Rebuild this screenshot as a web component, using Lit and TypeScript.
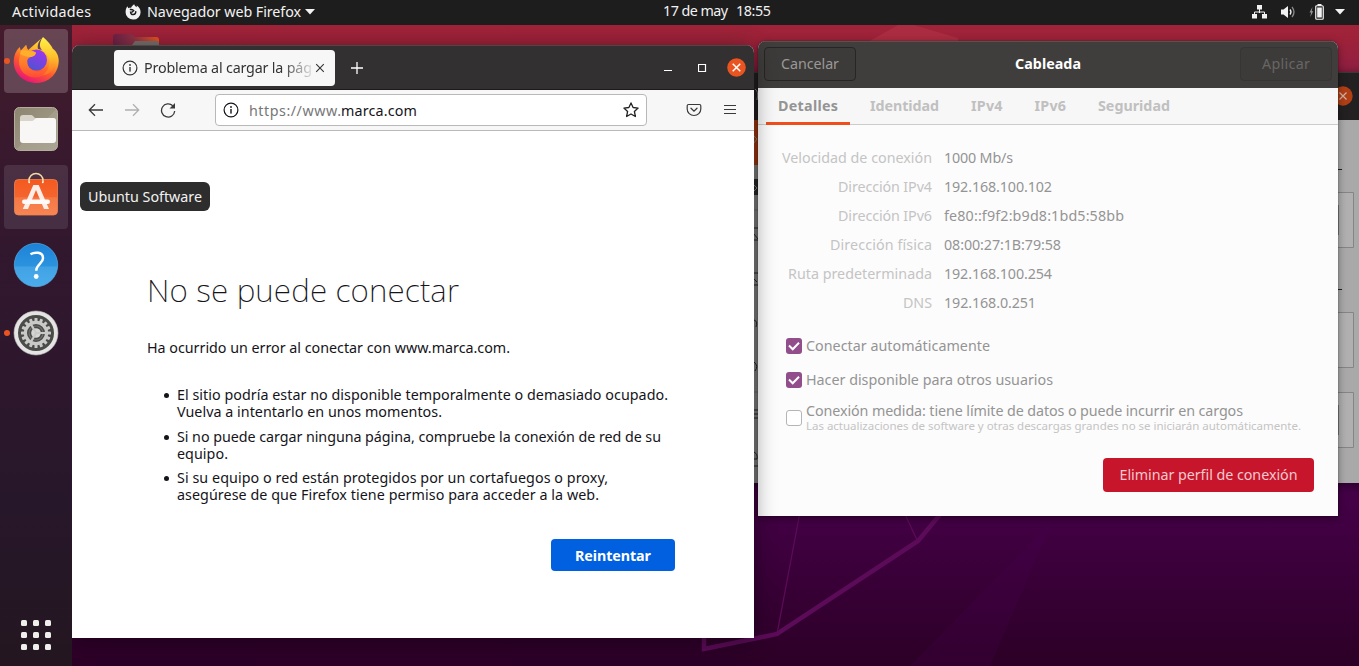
import { LitElement, html, css, svg } from "lit";
import { customElement, property } from "lit/decorators.js";

/** One line of text whose tracking is adjusted so that it spans `w` pixels. */
@customElement("fit-text")
class FitText extends LitElement {
  @property({ type: Number }) w = 0;
  @property() text = "";
  static styles = css`
    :host { display: block; flex: none; white-space: pre; overflow: visible; }
    .t { display: inline-block; white-space: pre; }
  `;
  render() {
    return html`<span class="t">${this.text}</span>`;
  }
  updated() {
    const t = this.renderRoot.querySelector(".t") as HTMLElement;
    t.style.letterSpacing = "0px";
    const natural = t.getBoundingClientRect().width;
    t.style.letterSpacing = `${(this.w - natural) / Math.max(1, this.text.length - 1)}px`;
    this.style.width = `${this.w}px`;
  }
}

const fit = (text: string, w: number, cls = "") =>
  html`<fit-text class=${cls} .text=${text} .w=${w}></fit-text>`;

const infoIcon = html`<svg class="i16" viewBox="0 0 16 16"><circle cx="8" cy="8" r="6.9" fill="none" stroke="currentColor" stroke-width="1.2"/><rect x="7.3" y="7" width="1.4" height="4.6" fill="currentColor"/><circle cx="8" cy="5" r=".9" fill="currentColor"/></svg>`;

@customElement("top-bar")
class TopBar extends LitElement {
  static styles = css`
    :host { display: flex; height: 25px; background: #1d1d1d; color: #f2f2f2; line-height: 23px; box-sizing: border-box; }
    .left, .right { display: flex; align-items: center; height: 23px; box-sizing: border-box; }
    .left { padding-left: 12px; width: 663px; flex: none; }
    .fx { margin: 0 6px 0 34px; }
    .caret { margin-left: 4px; }
    .clock { display: flex; gap: 8px; flex: none; line-height: 22px; }
    .right { flex: 1; justify-content: flex-end; padding-right: 14px; }
    .net { margin-right: 14px; }
    .snd { margin-right: 13px; }
    .bat { margin-right: 11px; }
    svg { display: block; flex: none; }
  `;
  render() {
    return html`
      <div class="left">
        ${fit("Actividades", 79)}
        <svg class="fx" width="16" height="16" viewBox="0 0 16 16"><path fill="#f2f2f2" d="M9.200.2c.4 1.500 1.400 2 2.300 3 .3-.6.3-1 .2-1.600 2.300 1.300 3.900 3.700 3.900 6.600a7.500 7.300 0 0 1-15 .2C.5 6 1.200 4 2.500 2.300c.1.900.4 1.400.9 1.900.9-.5 1.700-.6 2.700-.4C6.500 2.300 7.800 1.300 9.200.2z"/><path d="M4.800 5.600c1.700-.3 3 .2 3.800.9L7.400 7.900l-1.800.3c.1 1.700 1.300 2.500 2.600 2.400 1.900-.1 2.900-1.700 2.400-3.500" fill="none" stroke="#1d1d1d" stroke-width="1.500"/></svg>
        ${fit("Navegador web Firefox", 154)}
        <svg class="caret" width="10" height="6" viewBox="0 0 10 6"><path fill="#f2f2f2" d="M0 0h10L5 5.500z"/></svg>
      </div>
      <div class="clock">${fit("17 de may", 65)}${fit("18:55", 35)}</div>
      <div class="right">
        <svg class="net" width="15" height="14" viewBox="0 0 15 14"><path d="M7.500 4v4M2.500 9V7h10v2" fill="none" stroke="#f2f2f2"/><path fill="#f2f2f2" d="M5 0h5v4.500H5zM0 9h5v4.500H0zM10 9h5v4.500h-5z"/></svg>
        <svg class="snd" width="15" height="14" viewBox="0 0 15 14"><path fill="#f2f2f2" d="M0 4.500h2.500L7 1v12L2.500 9.500H0z"/><path d="M9 4.500q2 2.500 0 5" fill="none" stroke="#f2f2f2" stroke-width="1.300"/><path d="M11 2q4 5 0 10" fill="none" stroke="#8a8a8a" stroke-width="1.300"/></svg>
        <svg class="bat" width="15" height="16" viewBox="0 0 15 16"><path fill="#999" d="M3.500 3 .5 8.600h1.600L1.300 13l2.900-5.700H2.700z"/><rect x="6.750" y="1.750" width="7.500" height="13.500" rx="1" fill="none" stroke="#f2f2f2" stroke-width="1.200"/><path fill="#f2f2f2" d="M8.200 3.500h4.600v10H8.200zM8.500 0h4v2h-4z"/></svg>
        <svg width="10" height="6" viewBox="0 0 10 6"><path fill="#f2f2f2" d="M0 0h10L5 5.500z"/></svg>
      </div>`;
  }
}

@customElement("app-dock")
class AppDock extends LitElement {
  static styles = css`
    :host { display: flex; flex-direction: column; gap: 4px; width: 72px; box-sizing: border-box; padding: 4px 4px 13px;
      background: linear-gradient(#451b2c 0, #3d1a2d 80px, #34182e 170px, #2e172d 330px, #27172a 480px, #241620 641px); }
    .slot { width: 64px; height: 64px; border-radius: 4px; display: flex; position: relative; }
    .active { background: rgba(255,255,255,.19); }
    .hover { background: rgba(255,255,255,.1); }
    .run::before { content: ""; position: absolute; left: 0; top: 29px; width: 6px; height: 6px; border-radius: 50%; background: #e95420; }
    svg { display: block; }
    .grid { margin: auto auto 0; width: 30px; display: grid; grid-template-columns: repeat(3, 6px); gap: 6px; padding-bottom: 3px; }
    .grid i { width: 6px; height: 6px; border-radius: 1.500px; background: #f0eeec; }
  `;
  render() {
    const teeth = Array.from({ length: 16 }, (_, i) =>
      svg`<rect x="-1.500" y="-15" width="3" height="4" rx=".6" fill="#c9c9c7" transform="rotate(${i * 22.5})"/>`);
    return html`
      <div class="slot active run"><svg width="64" height="64" viewBox="0 0 64 64">
        <defs>
          <linearGradient id="f1" x1=".8" y1="0" x2=".3" y2="1"><stop offset="0" stop-color="#fff044"/><stop offset=".35" stop-color="#ffb52a"/><stop offset=".65" stop-color="#ff5a2c"/><stop offset="1" stop-color="#e6117a"/></linearGradient>
          <linearGradient id="f2" x1=".7" y1="0" x2=".2" y2="1"><stop offset="0" stop-color="#a034ee"/><stop offset="1" stop-color="#4a55d0"/></linearGradient>
          <linearGradient id="f3" x1="0" y1="0" x2="0" y2="1"><stop offset="0" stop-color="#fff24a"/><stop offset=".5" stop-color="#ffc22c"/><stop offset="1" stop-color="#ff6a26"/></linearGradient>
          <linearGradient id="f4" x1="0" y1="0" x2="0" y2="1"><stop offset="0" stop-color="#ffa02c"/><stop offset=".6" stop-color="#ff7a2a"/><stop offset="1" stop-color="#ff4a38"/></linearGradient>
        </defs>
        <path fill="url(#f1)" d="M39 8c-4 3.500-6 8-5 12l8 2 7-2c3 2 5.500 6 5.700 11C55 44 45 54 32.500 54 20 54 9.700 45 9.700 32.500c0-6 2-10.500 6-14.500l1 3.500 5.500-5.500c.2 2 .8 3.500 2 5z"/>
        <circle cx="32.500" cy="31" r="10.500" fill="url(#f2)"/>
        <path fill="url(#f3)" d="M39 8c4 3.500 8.500 8 11 14 3 6 3 14-2 19.500-4 4.500-9 5.500-13 5 8-2 11-8 10.500-15-.6-5-4-8-7-10-3.500-3-3.500-8 .5-13.500z"/>
        <path fill="url(#f4)" d="M22.200 16c.2 2 .8 4 2.300 6 2.500-.6 5-.3 7.500 1.500-.5 3-1.500 3.500-5 4.500-3 1-4 2.500-3.700 5 .4 6 5 9.500 10.200 9.500 4.500 0 8-2 10-5-1 7-6 11-12.500 11-9 0-16-7-16-15.500 0-6.500 2.700-12.500 7.200-17z"/>
        <path fill="#ffb52c" opacity=".85" d="M17 21.500c3-.6 6-.2 8 .7 3 0 5 .2 7 1.500-1 2.600-2 3.200-5 4.300-4-.2-8-1-11-3z"/>
      </svg></div>
      <div class="slot"><svg width="64" height="64" viewBox="0 0 64 64">
        <defs><linearGradient id="g1" x1="0" y1="0" x2="1" y2="1"><stop offset="0" stop-color="#8c8670"/><stop offset=".5" stop-color="#999380"/><stop offset=".51" stop-color="#a39d8a"/><stop offset="1" stop-color="#aaa593"/></linearGradient></defs>
        <rect x="10.500" y="10.500" width="43" height="43" rx="5" fill="url(#g1)" stroke="#b3ae9c"/>
        <path fill="#d9d4ca" d="M16 21q0-3 3-3h8q1 0 2 1l2 2h18q3 0 3 3v6H16z"/>
        <path fill="#f8f7f6" d="M16 24h12q1 0 2-1l1-1q1-1 2-1h16q3 0 3 3v19q0 3-3 3H19q-3 0-3-3z"/>
      </svg></div>
      <div class="slot hover"><svg width="64" height="64" viewBox="0 0 64 64">
        <defs><linearGradient id="s1" x1="0" y1="0" x2="0" y2="1"><stop offset="0" stop-color="#f4591f"/><stop offset=".5" stop-color="#f4652e"/><stop offset=".51" stop-color="#f57845"/><stop offset="1" stop-color="#f88552"/></linearGradient></defs>
        <rect x="10.500" y="14.500" width="43" height="35.500" rx="4" fill="url(#s1)" stroke="#ee8352" stroke-width=".8"/>
        <path d="M25 17v-1.500a7 7 0 0 1 14 0V17" fill="none" stroke="#f3d9a4" stroke-width="1.600"/>
        <path fill="#fbeee8" d="M29.300 20h5.400L45 44h-5l-8-19-8 19h-5.200z"/>
        <rect x="18" y="34.500" width="28" height="4.500" rx="2.200" fill="#fffaf7"/>
        <circle cx="25.200" cy="17.300" r=".9" fill="#fff"/><circle cx="38.800" cy="17.300" r=".9" fill="#fff"/>
      </svg></div>
      <div class="slot"><svg width="64" height="64" viewBox="0 0 64 64">
        <defs><linearGradient id="h1" x1="0" y1="0" x2="0" y2="1"><stop offset="0" stop-color="#1c82d8"/><stop offset=".53" stop-color="#2c93df"/><stop offset=".54" stop-color="#41a3e5"/><stop offset="1" stop-color="#4aaceb"/></linearGradient></defs>
        <circle cx="32" cy="32" r="21.700" fill="url(#h1)" stroke="#56aee8" stroke-width=".7"/>
        <path d="M26.500 21.300c4-2.500 12.500-2.700 12.500 3.900 0 5.500-6.800 6-6.800 12.600" fill="none" stroke="#fff" stroke-width="2.500"/>
        <circle cx="32.200" cy="43.500" r="2.400" fill="#fff"/>
      </svg></div>
      <div class="slot run"><svg width="64" height="64" viewBox="0 0 64 64">
        <circle cx="32" cy="32" r="20" fill="#4b4b49" stroke="#e4e4e2" stroke-width="4"/>
        <circle cx="32" cy="32" r="22" fill="none" stroke="#bdbbb8" stroke-width=".6"/>
        <g transform="translate(32 32)">${teeth}
          <circle r="10.600" fill="none" stroke="#c9c9c7" stroke-width="3.200"/>
          <circle r="4.800" fill="#d6d6d4"/>
          <path d="M0 0h10M0 0-5-8.700M0 0-5 8.700" stroke="#c9c9c7" stroke-width="2.200"/>
          <circle r="7" fill="none" stroke="#c9c9c7" stroke-width="1.200" opacity=".3"/>
        </g>
      </svg></div>
      <div class="grid">${Array.from({ length: 9 }, () => html`<i></i>`)}</div>`;
  }
}

@customElement("firefox-window")
class FirefoxWindow extends LitElement {
  static styles = css`
    :host { display: flex; flex-direction: column; box-sizing: border-box; border-radius: 8px 8px 0 0; overflow: hidden; background: #fff; color: #15141a; }
    svg { display: block; flex: none; }
    .i16 { width: 16px; height: 16px; }
    .head { height: 45px; box-sizing: border-box; background: #333031; border-top: 1px solid #4b4846; border-bottom: 1px solid #1c1a1a; display: flex; align-items: center; padding: 1px 8px 0 42px; }
    .tab { width: 221px; height: 36px; box-sizing: border-box; background: #f7f7f7; border-radius: 4px; color: #333; display: flex; align-items: center; padding: 0 12px 0 8px; gap: 6px; line-height: 36px; }
    .fade { width: 168px; -webkit-mask-image: linear-gradient(90deg, #000 138px, transparent 172px); mask-image: linear-gradient(90deg, #000 138px, transparent 172px); flex: none; }
    .x { margin-left: -3.500px; }
    .plus { margin-left: 15.500px; }
    .ctl { margin-left: auto; display: flex; align-items: center; gap: 25px; }
    .close { margin-left: -5px; margin-top: -1px; }
    .bar { height: 41px; box-sizing: border-box; background: #f7f7f7; border-bottom: 1px solid #b9b9b9; display: flex; align-items: center; padding: 0 16px; }
    .fwd { margin: 0 20px; }
    .url { margin-left: 39px; width: 432px; height: 32px; box-sizing: border-box; border: 1px solid #b8b8b8; border-radius: 4px; background: #fff; display: flex; align-items: center; padding: 0 7px; line-height: 31px; }
    .proto { margin-left: 10px; color: #777; }
    .star { margin-left: auto; }
    .pocket { margin-left: 39px; }
    .menu { margin-left: 20px; }
    .page { flex: 1; padding: 138px 79px 0 75px; display: flex; flex-direction: column; }
    .h { font-family: "Noto Sans", "Open Sans", sans-serif; font-size: 31.500px; font-weight: 200; line-height: 42px; }
    .p { margin-top: 28px; line-height: 17px; }
    ul { margin: 30px 0 0; padding: 0 0 0 30px; list-style: none; line-height: 17px; display: flex; flex-direction: column; gap: 7.500px; }
    li { position: relative; }
    li::before { content: ""; position: absolute; left: -13px; top: 7px; width: 5px; height: 5px; border-radius: 50%; background: #15141a; }
    .btn { align-self: flex-end; width: 124px; height: 32px; margin-top: 36px; border-radius: 4px; background: #0060df; color: #fff; font-weight: 700; line-height: 33px; display: flex; justify-content: center; }
  `;
  render() {
    return html`
      <div class="head">
        <div class="tab">${infoIcon}
          <div class="fade">${fit("Problema al cargar la pág", 168)}</div>
          <svg class="x" width="10" height="10" viewBox="0 0 10 10"><path d="m1.200 1.200 7.600 7.600M8.800 1.200 1.200 8.800" stroke="#333" stroke-width="1.100"/></svg>
        </div>
        <svg class="plus" width="12" height="12" viewBox="0 0 12 12"><path d="M6 0v12M0 6h12" stroke="#fff" stroke-width="1.300"/></svg>
        <div class="ctl">
          <svg width="9" height="9" viewBox="0 0 9 9"><path d="M0 6.500h8" stroke="#fff"/></svg>
          <svg width="9" height="9" viewBox="0 0 9 9"><path d="M.5.5h7v7h-7z" fill="none" stroke="#fff" stroke-width="1.200"/></svg>
          <svg class="close" width="19" height="19" viewBox="0 0 19 19"><circle cx="9.500" cy="9.500" r="9.300" fill="#e95420"/><path d="m5.700 5.700 7.600 7.600M13.300 5.700l-7.600 7.600" stroke="#fff" stroke-width="1.500"/></svg>
        </div>
      </div>
      <div class="bar">
        <svg width="16" height="16" viewBox="0 0 16 16"><path d="M15 8H1.500M7 2.300 1.300 8 7 13.700" fill="none" stroke="#3a3a3a" stroke-width="1.300"/></svg>
        <svg class="fwd" width="16" height="16" viewBox="0 0 16 16"><path d="M1 8h13.500M9 2.300 14.700 8 9 13.700" fill="none" stroke="#b0b0b0" stroke-width="1.300"/></svg>
        <svg width="16" height="16" viewBox="0 0 16 16"><path d="M14.700 9A6.600 6.600 0 1 1 12.800 3.800" fill="none" stroke="#3a3a3a" stroke-width="1.300"/><path fill="#3a3a3a" d="M15 1v5.500H9.500z"/></svg>
        <div class="url">${infoIcon}${fit("https://www.", 92, "proto")}${fit("marca.com", 76)}
          <svg class="star" width="16" height="16" viewBox="0 0 16 16"><path d="m8 .9 2.100 4.600 5 .6-3.700 3.400 1 5L8 12l-4.400 2.500 1-5L.9 6.100l5-.6z" fill="none" stroke="#222" stroke-width="1.300" stroke-linejoin="round"/></svg>
        </div>
        <svg class="pocket" width="16" height="16" viewBox="0 0 16 16"><path d="M2.500 2.500h11q1.300 0 1.300 1.300V7a6.800 6.500 0 0 1-13.600 0V3.800q0-1.300 1.300-1.300z" fill="none" stroke="#3a3a3a" stroke-width="1.200"/><path d="m5 6.200 3 2.900 3-2.900" fill="none" stroke="#3a3a3a" stroke-width="1.300" stroke-linecap="round"/></svg>
        <svg class="menu" width="16" height="16" viewBox="0 0 16 16"><path d="M2 3.500h12M2 7.500h12M2 11.500h12" stroke="#3a3a3a" stroke-width="1.200"/></svg>
      </div>
      <div class="page">
        ${fit("No se puede conectar", 312, "h")}
        ${fit("Ha ocurrido un error al conectar con www.marca.com.", 363, "p")}
        <ul>
          <li>${fit("El sitio podría estar no disponible temporalmente o demasiado ocupado.", 491)}${fit("Vuelva a intentarlo en unos momentos.", 265)}</li>
          <li>${fit("Si no puede cargar ninguna página, compruebe la conexión de red de su", 484)}${fit("equipo.", 51)}</li>
          <li>${fit("Si su equipo o red están protegidos por un cortafuegos o proxy,", 431)}${fit("asegúrese de que Firefox tiene permiso para acceder a la web.", 422)}</li>
        </ul>
        <div class="btn">${fit("Reintentar", 76)}</div>
      </div>`;
  }
}

@customElement("network-dialog")
class NetworkDialog extends LitElement {
  static styles = css`
    :host { display: flex; flex-direction: column; box-sizing: border-box; border-radius: 8px 8px 0 0; overflow: hidden; background: #fcfcfc; color: #949494; }
    .head { height: 47px; box-sizing: border-box; border-top: 1px solid #55524f; background: #403e3c; display: flex; align-items: center; justify-content: space-between; padding: 0 6px 2px; }
    .b { width: 92px; height: 34px; box-sizing: border-box; border: 1px solid #272625; border-radius: 4px; display: flex; justify-content: center; line-height: 32px; background: #3d3b39; color: #9a9896; }
    .dis { color: #686664; border-color: #373533; }
    .title { color: #fff; font-weight: 700; line-height: 32px; }
    .tabs { height: 37px; box-sizing: border-box; background: #f7f7f7; border-bottom: 1px solid #ccc; display: flex; padding: 0 8px; gap: 8px; font-weight: 700; color: #c0c0c0; line-height: 35px; }
    .tab { box-sizing: border-box; height: 37px; padding: 0 12px; }
    .on { color: #949494; border-bottom: 3px solid #f04f1c; }
    .body { flex: 1; display: flex; flex-direction: column; padding: 18px 24px 24px 24px; }
    .grid { display: grid; grid-template-columns: 150px 1fr; column-gap: 12px; grid-auto-rows: 29px; line-height: 29px; }
    .k { justify-self: end; color: #c4c4c4; }
    .row { display: flex; align-items: center; gap: 4px; height: 34px; padding-left: 4px; line-height: 34px; }
    .first { margin-top: 12px; }
    .box { width: 16px; height: 16px; flex: none; border-radius: 3px; background: #924d8b; }
    .off { box-sizing: border-box; background: #fff; border: 1px solid #b5b5b5; margin-top: 8px; }
    .two { line-height: 15px; padding-top: 8px; }
    .small { font-size: 11.500px; color: #c4c4c4; }
    svg { display: block; }
    .del { margin: auto 0 0 auto; width: 211px; height: 34px; border-radius: 4px; background: #c7162b; color: #f6c9ce; line-height: 33px; display: flex; justify-content: center; }
  `;
  render() {
    const tabs: [string, number][] = [["Detalles", 60], ["Identidad", 69], ["IPv4", 31.5], ["IPv6", 31.5], ["Seguridad", 72]];
    const rows: [string, number, string, number][] = [
      ["Velocidad de conexión", 150, "1000 Mb/s", 69],
      ["Dirección IPv4", 94, "192.168.100.102", 108],
      ["Dirección IPv6", 94, "fe80::f9f2:b9d8:1bd5:58bb", 180],
      ["Dirección física", 102, "08:00:27:1B:79:58", 117],
      ["Ruta predeterminada", 144, "192.168.100.254", 108],
      ["DNS", 29, "192.168.0.251", 92],
    ];
    const tick = html`<svg width="16" height="16" viewBox="0 0 16 16"><path d="m3 7.500 3.700 3.700L13 4.700" fill="none" stroke="#fff" stroke-width="2"/></svg>`;
    return html`
      <div class="head"><div class="b">${fit("Cancelar", 58)}</div>${fit("Cableada", 66, "title")}<div class="b dis">${fit("Aplicar", 48)}</div></div>
      <div class="tabs">${tabs.map(([t, w], i) => html`<div class="tab ${i ? "" : "on"}">${fit(t, w)}</div>`)}</div>
      <div class="body">
        <div class="grid">${rows.map(([k, a, v, b]) => html`${fit(k, a, "k")}${fit(v, b)}`)}</div>
        <div class="row first"><div class="box">${tick}</div>${fit("Conectar automáticamente", 184)}</div>
        <div class="row"><div class="box">${tick}</div>${fit("Hacer disponible para otros usuarios", 247)}</div>
        <div class="row"><div class="box off"></div><div class="two">${fit("Conexión medida: tiene límite de datos o puede incurrir en cargos", 437)}${fit("Las actualizaciones de software y otras descargas grandes no se iniciarán automáticamente.", 495, "small")}</div></div>
        <div class="del">${fit("Eliminar perfil de conexión", 178)}</div>
      </div>`;
  }
}

@customElement("app-root")
class AppRoot extends LitElement {
  static styles = css`
    :host { display: flex; flex-direction: column; position: relative; width: 1359px; height: 666px; overflow: hidden; background: #2d0027; font-family: "Noto Sans", "Open Sans", sans-serif; font-size: 14.300px; }
    .desk { flex: 1; display: flex; min-height: 0; }
    .wall { position: absolute; left: 0; top: 0; }
    top-bar, app-dock { position: relative; z-index: 1; }
    top-bar { z-index: 5; }
    .settings { position: absolute; left: 740px; top: 72px; width: 640px; height: 411px; background: #a9a9a9; box-shadow: 0 2px 10px rgba(0,0,0,.5); }
    .settings svg { display: block; }
    network-dialog { position: absolute; left: 758px; top: 41px; width: 580px; height: 475px; }
    .shade { position: absolute; left: 758px; top: 41px; width: 580px; height: 475px; border-radius: 8px 8px 0 0; box-shadow: 0 2px 9px rgba(0,0,0,.4), 0 0 1px rgba(0,0,0,.8); }
    firefox-window { position: absolute; left: 72px; top: 45px; width: 682px; height: 593px; }
    .fshade { position: absolute; left: 72px; top: 45px; width: 682px; height: 593px; border-radius: 8px 8px 0 0; box-shadow: 0 3px 22px rgba(0,0,0,.42); }
    .tip { position: absolute; z-index: 6; left: 80px; top: 182px; width: 130px; height: 29px; border-radius: 6px; background: #2d2d2d; color: #f2f2f2; display: flex; justify-content: center; line-height: 29px; }
  `;
  render() {
    return html`
      <svg class="wall" width="1359" height="666" viewBox="0 0 1359 666">
        <defs><linearGradient id="w" x1="0" y1="0" x2="0" y2="1">
          <stop offset="0" stop-color="#a42438"/><stop offset=".06" stop-color="#9d2239"/><stop offset=".11" stop-color="#8f1f44"/><stop offset=".3" stop-color="#741040"/><stop offset=".72" stop-color="#46014a"/><stop offset=".8" stop-color="#400041"/><stop offset="1" stop-color="#2c0026"/></linearGradient>
          <linearGradient id="fo" x1="0" y1="0" x2="1" y2="0"><stop offset="0" stop-color="#6d2146"/><stop offset=".45" stop-color="#8e3145"/><stop offset="1" stop-color="#e95420"/></linearGradient></defs>
        <rect width="1359" height="666" fill="url(#w)"/>
        <path fill="#aa2c40" d="M866 43 898 25h16l44 13v5z"/>
        <path fill="#4b0052" opacity=".22" d="M1053 520 910 666h80z"/>
        <g fill="none" stroke="#5c0b58"><path stroke-width="4.500" d="M704 630v19l73-15 141-93 25-30"/><path stroke-width="1.300" d="m777 634 23-122M917 540l-14-30"/></g>
        <path fill="url(#fo)" d="M113 37q0-3 3-3h14q2 0 3 1l2 2h21q3 0 3 3v10h-46z"/>
        <path fill="#77706f" d="M114 45h18l3-4h21q3 0 3 3v5h-45z"/>
      </svg>
      <top-bar></top-bar>
      <div class="desk"><app-dock></app-dock></div>
      <div class="settings"><svg width="640" height="411" viewBox="740 72 640 411">
        <path fill="#232021" d="M740 72h619v48H740z"/><path fill="#3c3837" d="M740 72h619v1H740z"/><path fill="#858383" d="M740 120h20v363h-20z"/>
        <path fill="#a33a12" d="M740 120h20v45h-20z"/><path fill="#2a2829" d="M740 179h18v16h-18z"/>
        <path d="m754 185 3 3-3 3M754 136l3 3-3 4M755 89q4 2 2 11" fill="none" stroke="#8b8889"/>
        <path d="M754 228h4M754 234l4 5M754 240h4M754 273h4M754 279l3 3M754 285h4M754 320q4 1 2 7M754 362q5 4 1 9M754 410h4M754 414h4M754 418h4M754 452q4 2 3 7h-3M754 466h4" fill="none" stroke="#242424"/>
        <path d="M754 210h4M754 392h4" stroke="#6d6b6b"/>
        <path fill="#b0b0b0" stroke="#858585" d="M1300 192.500h53.500v55H1300zM1300 312.500h53.500v55H1300zM1300 392.500h53.500v55H1300z"/>
        <path fill="#222" d="M1330 169h12v1h-12zM1330 289h12v1h-12z"/><path fill="#777" d="M1338 205h1v30h-1zM1338 405h1v30h-1z"/>
        <circle cx="1343" cy="96" r="9.700" fill="#b13f16"/><path d="m1339.500 92.500 7 7M1346.500 92.500l-7 7" stroke="#d2b4a8" stroke-width="1.200"/>
      </svg></div>
      <div class="shade"></div>
      <network-dialog></network-dialog>
      <div class="fshade"></div>
      <firefox-window></firefox-window>
      <div class="tip">${fit("Ubuntu Software", 114)}</div>`;
  }
}
